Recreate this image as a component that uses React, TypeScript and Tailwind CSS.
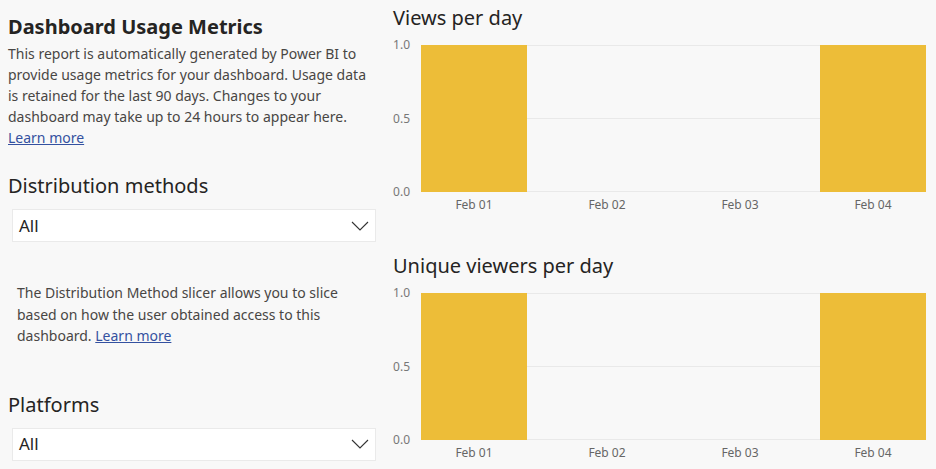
import React from 'react'

const FONT = "font-['Segoe_UI','Noto_Sans',sans-serif]"

const days = ['Feb 01', 'Feb 02', 'Feb 03', 'Feb 04']

interface ChartProps {
  title: string
  values: number[]
}

// Simple column chart, 0..1 axis with three gridlines
const ColumnChart: React.FC<ChartProps> = ({ title, values }) => {
  return (
    <div className="flex flex-col">
      <h2 className="text-[20px] leading-[28px] text-[#252423] pl-2">{title}</h2>
      <div className="flex mt-[13px]">
        {/* y axis */}
        <div className="relative w-[36px] h-[147px] text-[12px] text-[#777] leading-none">
          <span className="absolute right-[11px] top-[-6px]">1.0</span>
          <span className="absolute right-[11px] top-[68px]">0.5</span>
          <span className="absolute right-[11px] top-[141px]">0.0</span>
        </div>
        <div className="flex flex-col w-[505px]">
          <div className="relative h-[147px]">
            <div className="absolute inset-x-0 top-0 h-px bg-[#e9e9e9]" />
            <div className="absolute inset-x-0 top-[73px] h-px bg-[#e9e9e9]" />
            <div className="absolute inset-x-0 bottom-0 h-px bg-[#e9e9e9]" />
            <div className="relative flex justify-between items-end h-full">
              {values.map((v, i) => (
                <div
                  key={i}
                  className="w-[106px] bg-[#edbd38]"
                  style={{ height: `${v * 100}%` }}
                />
              ))}
            </div>
          </div>
          <div className="flex justify-between text-[12px] text-[#666] leading-[16px] mt-[5px]">
            {days.map((d) => (
              <span key={d} className="w-[106px] text-center">
                {d}
              </span>
            ))}
          </div>
        </div>
      </div>
    </div>
  )
}

const Slicer: React.FC = () => (
  <div className="ml-1 w-[364px] h-[33px] bg-white border border-[#eaeaea] flex items-center justify-between pl-[6px] pr-[5px]">
    <span className="text-[17px] text-[#252423]">All</span>
    <svg width="18" height="10" viewBox="0 0 18 10" fill="none" className="mr-[1px]">
      <path d="M1 1l8 8 8-8" stroke="#333" strokeWidth="1.1" />
    </svg>
  </div>
)

export default function App() {
  return (
    <div className={`${FONT} w-[936px] h-[469px] bg-[#f8f8f8] flex overflow-hidden`}>
      {/* Left column: description and slicers */}
      <div className="w-[385px] shrink-0 flex flex-col pl-2 pt-[14px]">
        <h1 className="text-[20px] leading-[26px] font-bold text-[#252423]">Dashboard Usage Metrics</h1>
        <p className="mt-[3px] text-[14px] leading-[21px] text-[#484644]">
          This report is automatically generated by Power BI to
          <br />
          provide usage metrics for your dashboard. Usage data
          <br />
          is retained for the last 90 days. Changes to your
          <br />
          dashboard may take up to 24 hours to appear here.
          <br />
          <a href="#" className="text-[#3451a0] underline">
            Learn more
          </a>
        </p>

        <h3 className="mt-[24px] text-[20px] leading-[28px] text-[#252423]">Distribution methods</h3>
        <div className="mt-[9px]">
          <Slicer />
        </div>

        <p className="mt-[40px] pl-[9px] text-[14px] leading-[21.5px] text-[#484644]">
          The Distribution Method slicer allows you to slice
          <br />
          based on how the user obtained access to this
          <br />
          dashboard.{' '}
          <a href="#" className="text-[#3451a0] underline">
            Learn more
          </a>
        </p>

        <h3 className="mt-[44px] text-[20px] leading-[28px] text-[#252423]">Platforms</h3>
        <div className="mt-[9px]">
          <Slicer />
        </div>
      </div>

      {/* Right column: charts */}
      <div className="flex-1 flex flex-col pt-[4px]">
        <ColumnChart title="Views per day" values={[1, 0, 0, 1]} />
        <div className="mt-[39px]">
          <ColumnChart title="Unique viewers per day" values={[1, 0, 0, 1]} />
        </div>
      </div>
    </div>
  )
}
